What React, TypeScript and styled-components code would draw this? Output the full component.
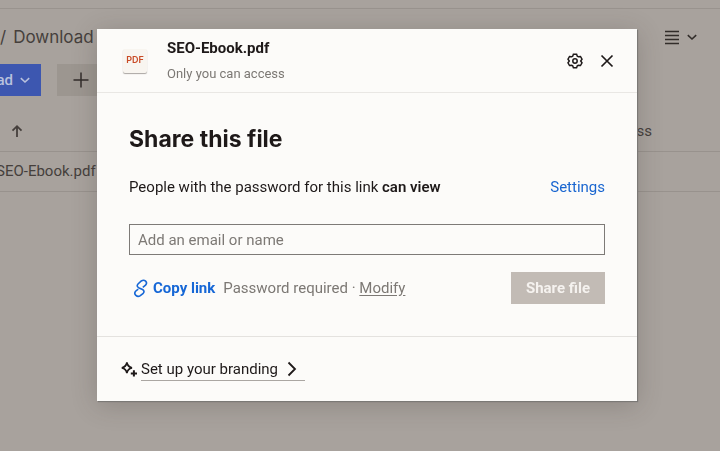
import React from "react";
import styled, { createGlobalStyle } from "styled-components";

const GlobalStyle = createGlobalStyle`
  * { box-sizing: border-box; }
  body {
    margin: 0;
    background: #a8a29d;
    color: #1e1919;
    font-family: Roboto, "Liberation Sans", sans-serif;
    font-size: 15px;
    line-height: 20px;
  }
  button, input { font: inherit; color: inherit; }
`;

const Page = styled.main`
  min-height: 100vh;
  overflow: hidden;
  color: #453f3c;
`;

const TopBar = styled.div`
  height: 9px;
  border-bottom: 1px solid #99938e;
`;

const TitleBar = styled.div`
  display: flex;
  align-items: center;
  justify-content: space-between;
  height: 55px;
  padding: 0 20px 0 0;
`;

const Crumbs = styled.nav`
  display: flex;
  gap: 7px;
  font-family: Inter, sans-serif;
  font-size: 17px;
  a { color: inherit; text-decoration: none; }
`;

const PlainButton = styled.button`
  display: inline-flex;
  align-items: center;
  justify-content: center;
  padding: 0;
  border: 0;
  background: none;
  cursor: pointer;
`;

const ViewButton = styled(PlainButton)`
  gap: 4px;
  color: #322d2a;
`;

const Toolbar = styled.div`
  display: flex;
  gap: 16px;
  margin-left: -80px;
`;

const ToolButton = styled(PlainButton)<{ $primary?: boolean }>`
  width: ${(p) => (p.$primary ? 121 : 96)}px;
  height: 32px;
  justify-content: ${(p) => (p.$primary ? "flex-end" : "flex-start")};
  gap: 4px;
  padding: 0 8px 0 12px;
  font-weight: 500;
  color: ${(p) => (p.$primary ? "#b9c1dd" : "#322d2a")};
  background: ${(p) => (p.$primary ? "#3d57b0" : "#9c9690")};
`;

const FileTable = styled.table`
  width: calc(100% + 4px);
  margin: 15px 0 0 -4px;
  border-collapse: collapse;
  table-layout: fixed;
  text-align: left;
  th, td {
    height: 40px;
    padding: 0;
    font-weight: 400;
    border-bottom: 1px solid #98928d;
  }
  th:last-child { width: 117px; }
  th svg { display: block; margin-left: 13px; }
`;

const Overlay = styled.div`
  position: fixed;
  inset: 0;
  display: flex;
  align-items: flex-start;
  padding: 29px 83px 50px 97px;
`;

const Dialog = styled.section`
  flex: 1;
  background: #fcfbf9;
  box-shadow: 1px 1px 1px #7b7976, 0 4px 24px rgba(60, 50, 45, 0.24);
`;

const DialogHeader = styled.header`
  display: flex;
  align-items: center;
  height: 64px;
  padding: 0 20px 0 26px;
  border-bottom: 1px solid #e9e7e4;
`;

const PdfBadge = styled.div`
  width: 24px;
  height: 24px;
  border-radius: 2px;
  background: #f8f5f0;
  box-shadow: 0 1px 1px #aaa6a2;
  color: #c94a25;
  font: 600 9px/22px Inter, sans-serif;
  text-align: center;
`;

const FileInfo = styled.div`
  flex: 1;
  margin-left: 20px;
`;

const FileName = styled.h1`
  margin: 0 0 6px;
  font-size: 15px;
  line-height: 20px;
  font-weight: 700;
`;

const FileAccess = styled.p`
  margin: 0;
  font-size: 13px;
  line-height: 20px;
  color: #7c7874;
`;

const HeaderActions = styled.div`
  display: flex;
  gap: 12px;
`;

const DialogBody = styled.div`
  height: 244px;
  padding: 32px 32px 0;
  border-bottom: 1px solid #e4e2df;
`;

const Heading = styled.h2`
  margin: 0 0 24px;
  font: 700 23px/28px Inter, sans-serif;
`;

const Row = styled.div`
  display: flex;
  align-items: center;
  justify-content: space-between;
`;

const Message = styled.p`
  margin: 0;
  strong { font-weight: 600; }
`;

const SettingsLink = styled.a`
  color: #1a66d0;
  text-decoration: none;
`;

const EmailInput = styled.input`
  display: block;
  width: 100%;
  height: 31px;
  margin: 27px 0 17px;
  padding: 0 8px;
  border: 1px solid #7d7a77;
  border-radius: 0;
  background: transparent;
  outline: 0;
  &::placeholder { color: #7d7975; opacity: 1; }
`;

const LinkGroup = styled.div`
  display: flex;
  align-items: center;
  gap: 8px;
  padding-left: 4px;
  color: #7c7874;
  a { color: inherit; text-underline-offset: 2px; }
`;

const CopyButton = styled(PlainButton)`
  gap: 4px;
  color: #1667d6;
  font-weight: 700;
`;

const ShareButton = styled.button`
  height: 32px;
  padding: 0 15px;
  border: 0;
  background: #c2bbb5;
  color: #f5f2ef;
  font-weight: 700;
`;

const DialogFooter = styled.footer`
  display: flex;
  gap: 4px;
  padding: 20px 24px;
`;

const BrandingLink = styled.a`
  display: inline-flex;
  align-items: center;
  gap: 5px;
  height: 24px;
  padding-right: 2px;
  border-bottom: 1px solid #aaa6a2;
  color: inherit;
  text-decoration: none;
`;

type IconProps = { size: number; d: string; stroke?: number; children?: React.ReactNode };

function Icon({ size, d, stroke = 1.5, children }: IconProps) {
  return (
    <svg width={size} height={size} viewBox={`0 0 ${size} ${size}`} fill="none" stroke="currentColor" strokeWidth={stroke} aria-hidden="true">
      <path d={d} />
      {children}
    </svg>
  );
}

function ChevronDown() {
  return <Icon size={16} stroke={1.6} d="M3.8 6.2 8 10l4.200-3.800" />;
}

export default function App() {
  return (
    <>
      <GlobalStyle />
      <Page>
        <TopBar />
        <TitleBar>
          <Crumbs aria-label="Breadcrumb">
            <span>/</span>
            <a href="#download">Download</a>
          </Crumbs>
          <ViewButton aria-label="Change view">
            <Icon size={16} d="M1 2.500h14M1 6.500h14M1 10.500h14M1 14.500h14" />
            <ChevronDown />
          </ViewButton>
        </TitleBar>
        <Toolbar>
          <ToolButton $primary>
            Upload
            <ChevronDown />
          </ToolButton>
          <ToolButton aria-label="Create">
            <Icon size={24} d="M12 4.500v15M4.500 12h15" />
          </ToolButton>
        </Toolbar>
        <FileTable>
          <thead>
            <tr>
              <th aria-label="Name">
                <Icon size={16} stroke={1.8} d="M8 14V3.500M3.500 7.700 8 3.200l4.500 4.500" />
              </th>
              <th>Access</th>
            </tr>
          </thead>
          <tbody>
            <tr>
              <td>SEO-Ebook.pdf</td>
              <td />
            </tr>
          </tbody>
        </FileTable>
      </Page>

      <Overlay>
        <Dialog role="dialog" aria-modal="true" aria-labelledby="share-title">
          <DialogHeader>
            <PdfBadge>PDF</PdfBadge>
            <FileInfo>
              <FileName>SEO-Ebook.pdf</FileName>
              <FileAccess>Only you can access</FileAccess>
            </FileInfo>
            <HeaderActions>
              <PlainButton aria-label="File settings">
                <Icon size={20} d="M8.400 3.300h3.200l.7 1.900 1.100.6 2.100-.3 1.500 2.600-1.300 1.900 1.300 1.900-1.500 2.600-2.100-.3-1.100.6-.7 1.900H8.400l-.7-1.900-1.100-.6-2.100.3L3 11.900 4.300 10 3 8.100l1.500-2.600 2.100.3 1.100-.6z">
                  <circle cx="10" cy="10" r="2.200" />
                </Icon>
              </PlainButton>
              <PlainButton aria-label="Close">
                <Icon size={20} stroke={1.700} d="m4.500 4.500 11 11m0-11-11 11" />
              </PlainButton>
            </HeaderActions>
          </DialogHeader>

          <DialogBody>
            <Heading id="share-title">Share this file</Heading>
            <Row>
              <Message>
                People with the password for this link <strong>can view</strong>
              </Message>
              <SettingsLink href="#settings">Settings</SettingsLink>
            </Row>
            <EmailInput type="text" placeholder="Add an email or name" aria-label="Add an email or name" />
            <Row>
              <LinkGroup>
                <CopyButton>
                  <svg width="16" height="20" viewBox="0 0 16 20" fill="none" stroke="currentColor" strokeWidth="1.6" aria-hidden="true">
                    <path d="M9.800 9.300 12.500 7.200C15.200 4.200 11.500 .8 8.300 3L5 6C3.600 7.600 4.200 8.800 5.600 9.700L9.500 11.500C11.100 12.400 11.500 13.900 10.200 15.300L7.300 17.600C4.200 19.900 .2 16.300 2.600 13.200L5.200 11.100" />
                  </svg>
                  Copy link
                </CopyButton>
                <span>
                  Password required · <a href="#modify">Modify</a>
                </span>
              </LinkGroup>
              <ShareButton disabled>Share file</ShareButton>
            </Row>
          </DialogBody>

          <DialogFooter>
            <svg width="16" height="24" viewBox="0 0 16 24" fill="none" stroke="currentColor" strokeWidth="1.700" aria-hidden="true">
              <path d="M5.900 5.500c.6 3.300 1.800 4.700 5.100 5.300-3.300.6-4.500 2-5.100 5.300-.6-3.300-1.800-4.700-5.100-5.300 3.300-.6 4.500-2 5.100-5.300z" />
              <path d="M12.900 13.300v6.200M9.800 16.400H16" strokeWidth="2" />
            </svg>
            <BrandingLink href="#branding">
              Set up your branding
              <Icon size={20} stroke={1.800} d="m5.500 3.500 6.500 6.500-6.500 6.500" />
            </BrandingLink>
          </DialogFooter>
        </Dialog>
      </Overlay>
    </>
  );
}
